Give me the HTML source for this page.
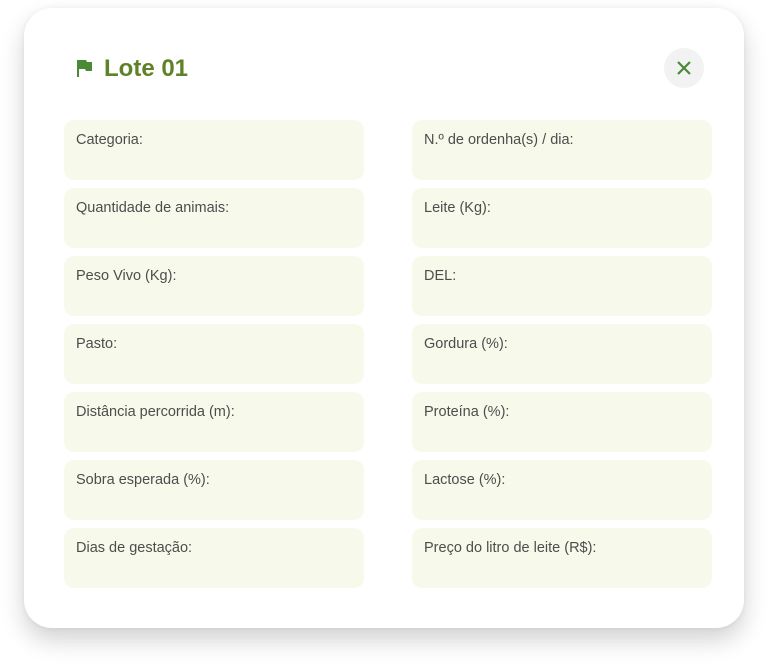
<!DOCTYPE html><html><head><style>
body{margin:0;width:768px;height:668px;background:#fff;font-family:"Liberation Sans",sans-serif;position:relative;overflow:hidden}
.card{position:absolute;left:24px;top:8px;width:720px;height:620px;background:#fff;border-radius:28px;box-shadow:0 12px 24px rgba(0,0,0,.18),0 0 6px rgba(0,0,0,.05)}
.t{position:absolute;left:104px;top:55px;font-size:24px;font-weight:bold;color:#5f8228}
.x{position:absolute;left:664px;top:48px;width:40px;height:40px;border-radius:50%;background:#f2f2f2}
.f{position:absolute;width:300px;height:60px;background:#f7f9eb;border-radius:10px}
.f span{position:absolute;left:12px;top:12px;font-size:14.5px;color:#4d4d4d}
</style></head><body><div class="card"></div>
<svg style="position:absolute;left:77px;top:60px" width="16" height="18" viewBox="0 0 16 18"><path d="M0 0h2v17H0z M2 0h7l1 2h5v9H9l-1-2H2z" fill="#4a8a34"/></svg>
<div class="t">Lote 01</div>
<div class="x"><svg width="40" height="40"><path d="M14 14l12 12M26 14L14 26" stroke="#4a8a34" stroke-width="2.2"/></svg></div>
<div class="f" style="left:64px;top:120px"><span>Categoria:</span></div>
<div class="f" style="left:64px;top:188px"><span>Quantidade de animais:</span></div>
<div class="f" style="left:64px;top:256px"><span>Peso Vivo (Kg):</span></div>
<div class="f" style="left:64px;top:324px"><span>Pasto:</span></div>
<div class="f" style="left:64px;top:392px"><span>Distância percorrida (m):</span></div>
<div class="f" style="left:64px;top:460px"><span>Sobra esperada (%):</span></div>
<div class="f" style="left:64px;top:528px"><span>Dias de gestação:</span></div>
<div class="f" style="left:412px;top:120px"><span>N.º de ordenha(s) / dia:</span></div>
<div class="f" style="left:412px;top:188px"><span>Leite (Kg):</span></div>
<div class="f" style="left:412px;top:256px"><span>DEL:</span></div>
<div class="f" style="left:412px;top:324px"><span>Gordura (%):</span></div>
<div class="f" style="left:412px;top:392px"><span>Proteína (%):</span></div>
<div class="f" style="left:412px;top:460px"><span>Lactose (%):</span></div>
<div class="f" style="left:412px;top:528px"><span>Preço do litro de leite (R$):</span></div>
</body></html>
